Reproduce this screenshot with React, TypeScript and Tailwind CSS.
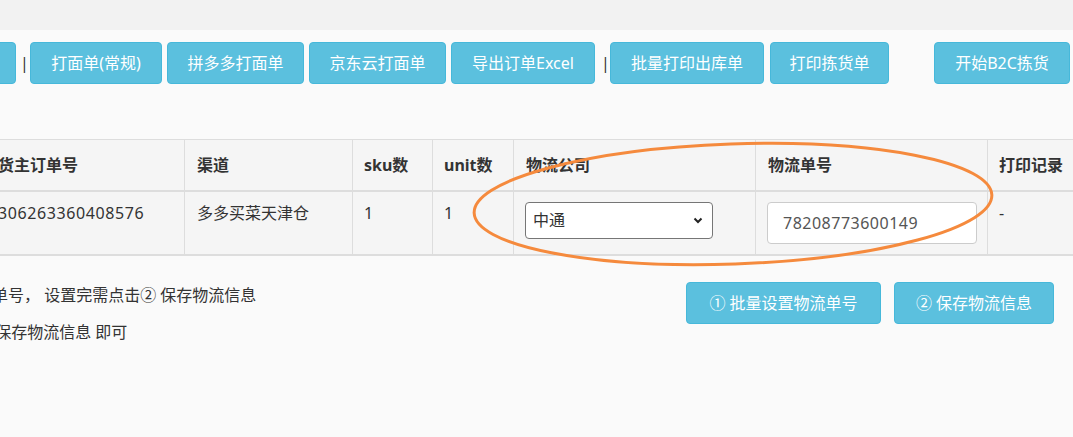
import React from "react";

const toolbar = [
  { label: "打面单(常规)", w: "w-[132px]" },
  { label: "拼多多打面单", w: "w-[137px]" },
  { label: "京东云打面单", w: "w-[137px]" },
  { label: "导出订单Excel", w: "w-[144px]" },
];

function Btn({ children, className = "" }: { children: React.ReactNode; className?: string }) {
  return (
    <button
      className={
        "flex h-[42px] shrink-0 items-center justify-center rounded-[4px] border border-[#46b8da] bg-[#5bc0de] text-[16px] text-white " +
        className
      }
    >
      {children}
    </button>
  );
}

export default function App() {
  return (
    <div className="relative h-[437px] w-[1073px] overflow-hidden bg-[#fafafa] font-['Noto_Sans','Noto_Sans_CJK_SC',sans-serif] text-[16px] text-[#333]">
      <div className="h-[30px] bg-[#f2f2f2]" />

      {/* toolbar */}
      <div className="mt-[12px] flex h-[42px] items-center">
        <Btn className="-ml-[100px] w-[116px]">打印</Btn>
        <span className="ml-[4px] mr-[8px] w-[2px] text-[#333]">|</span>
        <div className="flex gap-[5px]">
          {toolbar.map((b) => (
            <Btn key={b.label} className={b.w}>
              {b.label}
            </Btn>
          ))}
        </div>
        <span className="mx-[6px] w-[3px] text-[#333]">|</span>
        <div className="flex gap-[6px]">
          <Btn className="w-[154px]">批量打印出库单</Btn>
          <Btn className="w-[119px]">打印拣货单</Btn>
        </div>
        <Btn className="ml-[45px] w-[136px]">开始B2C拣货</Btn>
      </div>

      {/* table */}
      <div className="mt-[55px] -ml-[15px] w-[1200px]">
        <table className="w-[1200px] table-fixed border-collapse bg-[#f5f5f5]">
          <colgroup>
            <col className="w-[199px]" />
            <col className="w-[168px]" />
            <col className="w-[80px]" />
            <col className="w-[81px]" />
            <col className="w-[242px]" />
            <col className="w-[232px]" />
            <col />
          </colgroup>
          <thead>
            <tr className="h-[51px] border-b-2 border-[#ddd] text-left font-bold">
              <th className="border border-[#ddd] px-[12px]">货主订单号</th>
              <th className="border border-[#ddd] px-[12px]">渠道</th>
              <th className="border border-[#ddd] px-[11px]">sku数</th>
              <th className="border border-[#ddd] px-[11px]">unit数</th>
              <th className="border border-[#ddd] px-[12px]">物流公司</th>
              <th className="border border-[#ddd] px-[12px]">物流单号</th>
              <th className="border border-[#ddd] px-[11px]">打印记录</th>
            </tr>
          </thead>
          <tbody>
            <tr className="h-[64px] border-b-2 border-[#ddd] align-top leading-[22px]">
              <td className="border border-[#ddd] px-[12px] pt-[10px] tracking-[0.6px]">306263360408576</td>
              <td className="border border-[#ddd] px-[12px] pt-[10px]">多多买菜天津仓</td>
              <td className="border border-[#ddd] px-[11px] pt-[10px]">1</td>
              <td className="border border-[#ddd] px-[11px] pt-[10px]">1</td>
              <td className="border border-[#ddd] px-[11px] pt-[10px]">
                <div className="flex h-[37px] w-[188px] items-center justify-between rounded-[4px] border border-[#767676] bg-white pl-[7px] pr-[8px]">
                  <span>中通</span>
                  <svg width="12" height="12" viewBox="0 0 12 12" fill="none" stroke="#222" strokeWidth="2">
                    <path d="M2.5 4.5 6 8l3.5-3.5" />
                  </svg>
                </div>
              </td>
              <td className="border border-[#ddd] px-[11px] pt-[10px]">
                <div className="flex h-[42px] w-[210px] items-center rounded-[4px] border border-[#ccc] bg-white px-[15px] tracking-[0.5px] text-[#555]">
                  78208773600149
                </div>
              </td>
              <td className="border border-[#ddd] px-[11px] pt-[10px]">-</td>
            </tr>
          </tbody>
        </table>
      </div>

      {/* hint + actions */}
      <div className="mt-[26px] flex items-start justify-between pr-[19px]">
        <div className="pt-[1px]">
          <p className="-ml-[40px] leading-[24px]">物流单号， 设置完需点击② 保存物流信息</p>
          <p className="mt-[13px] -ml-[25px] leading-[24px]">② 保存物流信息 即可</p>
        </div>
        <div className="flex gap-[13px]">
          <Btn className="w-[195px]">① 批量设置物流单号</Btn>
          <Btn className="w-[160px]">② 保存物流信息</Btn>
        </div>
      </div>

      {/* hand-drawn highlight */}
      <svg className="pointer-events-none absolute left-0 top-0" width="1073" height="437">
        <ellipse
          cx="733"
          cy="204"
          rx="259"
          ry="60"
          transform="rotate(-2 733 204)"
          fill="none"
          stroke="#f58a3d"
          strokeWidth="3"
        />
      </svg>
    </div>
  );
}
